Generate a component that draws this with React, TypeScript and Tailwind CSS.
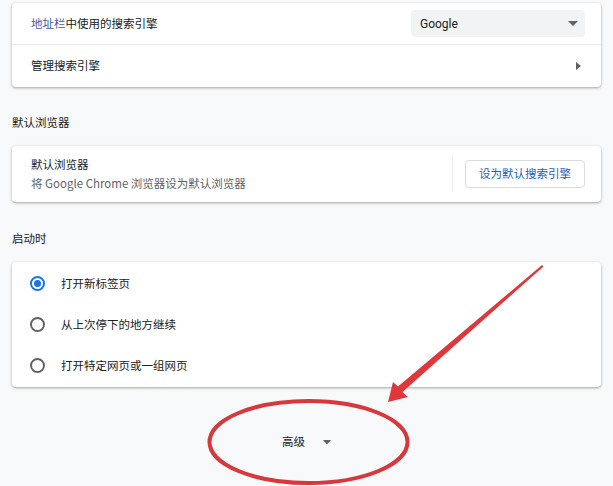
import React from "react";

const font = { fontFamily: '"Noto Sans CJK SC", "Noto Sans", Roboto, sans-serif' };

function Radio({ checked }: { checked?: boolean }) {
  return (
    <span
      className={`flex h-[15px] w-[15px] items-center justify-center rounded-full border-2 ${
        checked ? "border-[#1a73e8]" : "border-[#5f6368]"
      }`}
    >
      {checked && <span className="h-[7px] w-[7px] rounded-full bg-[#1a73e8]" />}
    </span>
  );
}

function Row({ label, checked }: { label: string; checked?: boolean }) {
  return (
    <div className="flex h-[41px] items-center pl-[18px]">
      <Radio checked={checked} />
      <span className="ml-[16px] text-[11.5px] text-[#202124]">{label}</span>
    </div>
  );
}

export default function App() {
  return (
    <div className="relative h-[486px] w-[613px] overflow-hidden bg-[#f8f9fa]" style={font}>
      <div className="px-[12px] pt-[3px]">
        <div className="rounded-[4px] bg-white shadow-[0_1px_2px_rgba(60,64,67,0.3),0_1px_3px_1px_rgba(60,64,67,0.12)]">
          <div className="flex h-[42px] items-center justify-between border-b border-[#eceef0] pl-[19px] pr-[16px]">
            <span className="text-[11.5px] text-[#202124]">
              <span className="text-[#3c5aa8]">地址栏</span>中使用的搜索引擎
            </span>
            <div className="flex h-[27px] w-[174px] items-center justify-between rounded-[4px] bg-[#f1f3f4] pl-[9px] pr-[7px]">
              <span className="text-[12px] text-[#202124]" style={{ fontFamily: "Roboto, sans-serif" }}>Google</span>
              <svg width="10" height="6" viewBox="0 0 10 6">
                <path d="M0 0 L10 0 L5 5 Z" fill="#5f6368" />
              </svg>
            </div>
          </div>
          <div className="flex h-[42px] items-center justify-between pl-[19px] pr-[20px]">
            <span className="text-[11.5px] text-[#202124]">管理搜索引擎</span>
            <svg width="5" height="8" viewBox="0 0 5 8">
              <path d="M0 0 L5 4 L0 8 Z" fill="#5f6368" />
            </svg>
          </div>
        </div>

        <div className="flex h-[59px] items-center pt-[12px] text-[11.5px] text-[#202124]">默认浏览器</div>

        <div className="flex h-[56px] items-center justify-between rounded-[4px] bg-white pl-[19px] pr-[16px] shadow-[0_1px_2px_rgba(60,64,67,0.3),0_1px_3px_1px_rgba(60,64,67,0.12)]">
          <div className="flex flex-col leading-[19px]">
            <span className="text-[11.5px] text-[#202124]">默认浏览器</span>
            <span className="text-[11.5px] text-[#5f6368]">将 Google Chrome 浏览器设为默认浏览器</span>
          </div>
          <div className="flex items-center">
            <div className="mr-[12px] h-[36px] w-px bg-[#eceef0]" />
            <div className="flex h-[28px] w-[120px] items-center justify-center rounded-[4px] border border-[#dadce0] text-[11.5px] text-[#1a5fc8]">
              设为默认搜索引擎
            </div>
          </div>
        </div>

        <div className="flex h-[60px] items-center pt-[14px] text-[11.5px] text-[#202124]">启动时</div>

        <div className="rounded-[4px] bg-white py-[1px] shadow-[0_1px_2px_rgba(60,64,67,0.3),0_1px_3px_1px_rgba(60,64,67,0.12)]">
          <Row label="打开新标签页" checked />
          <Row label="从上次停下的地方继续" />
          <Row label="打开特定网页或一组网页" />
        </div>

        <div className="flex h-[108px] items-center justify-center pt-[2px]">
          <span className="text-[11.5px] text-[#202124]">高级</span>
          <svg className="ml-[18px]" width="8" height="5" viewBox="0 0 8 5">
            <path d="M0 0 L8 0 L4 4.5 Z" fill="#5f6368" />
          </svg>
        </div>
      </div>

      <svg className="pointer-events-none absolute left-0 top-0" width="613" height="486" viewBox="0 0 613 486">
        <ellipse cx="308.5" cy="442" rx="99" ry="41" fill="none" stroke="#d8383c" strokeWidth="4" />
        <path
          d="M542 265 L543.5 266.5 L402.5 392 L408 397 L388 402 L393 382 L398 386.5 Z"
          fill="#e0373b"
        />
      </svg>
    </div>
  );
}
